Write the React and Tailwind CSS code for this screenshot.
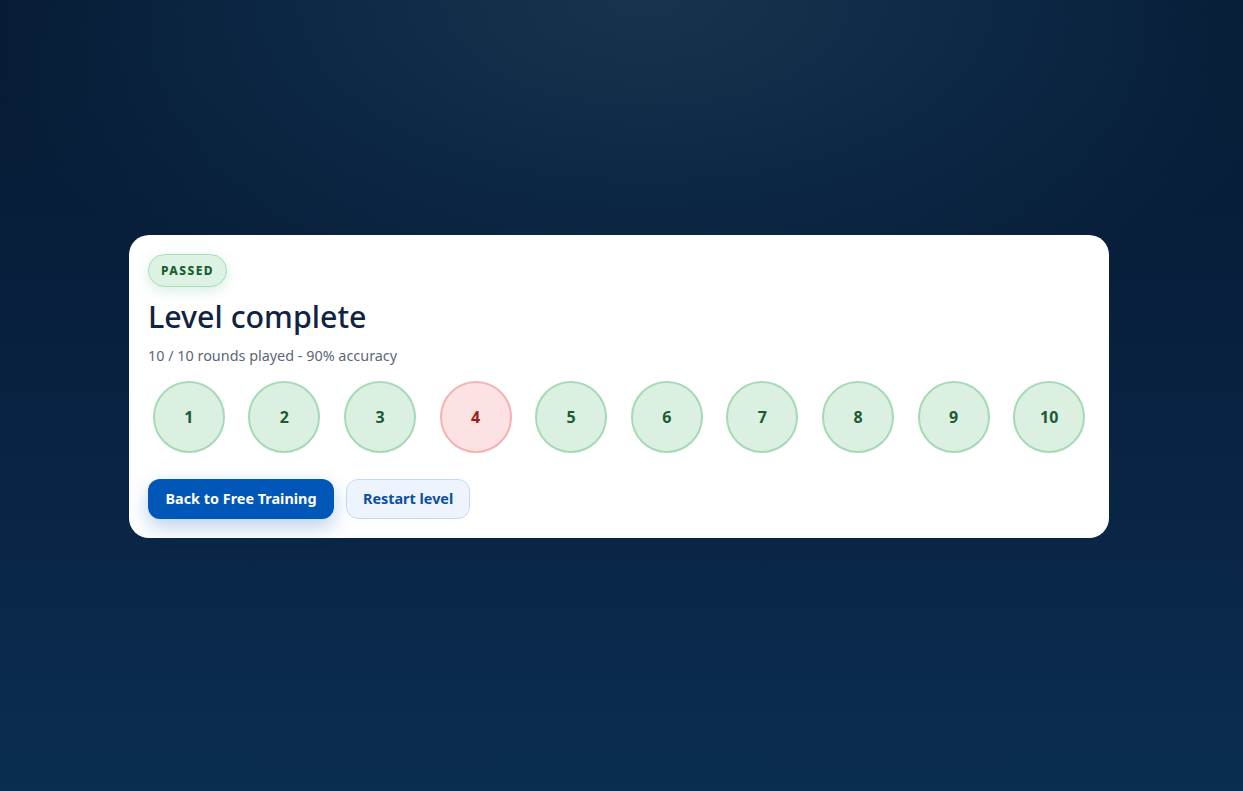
import React from "react";

const rounds = [
  { n: 1, ok: true },
  { n: 2, ok: true },
  { n: 3, ok: true },
  { n: 4, ok: false },
  { n: 5, ok: true },
  { n: 6, ok: true },
  { n: 7, ok: true },
  { n: 8, ok: true },
  { n: 9, ok: true },
  { n: 10, ok: true },
];

export default function App() {
  return (
    <div
      className="min-h-screen w-full flex items-center pl-[129px] pb-[18px] bg-[radial-gradient(ellipse_55%_45%_at_52%_0%,#17344e_0%,#0c2744_55%,transparent_100%),linear-gradient(180deg,#061a33_0%,#08213f_45%,#0b2d52_100%)]"
      style={{ fontFamily: '"Noto Sans", "Open Sans", sans-serif' }}
    >
      <div className="w-[980px] bg-white rounded-[20px] p-[19px]">
        {/* Status badge */}
        <span className="inline-flex items-center h-[33px] px-3 rounded-full bg-[#dcf3e4] border border-[#a8dcb9] text-[#17602f] text-[12px] font-extrabold tracking-[0.12em] shadow-[0_4px_14px_rgba(34,160,90,0.18)]">
          PASSED
        </span>

        <h1 className="mt-[11px] text-[30.4px] leading-[38px] font-medium text-[#0f2442]">
          Level complete
        </h1>
        <p className="mt-[10px] text-[14.4px] leading-[20px] text-[#5c6678]">
          10 / 10 rounds played - 90% accuracy
        </p>

        {/* Round results */}
        <div className="mt-[15px] grid grid-cols-10 gap-[14px]">
          {rounds.map((r) => (
            <div
              key={r.n}
              className={`mx-auto w-[72px] h-[72px] rounded-full border-2 flex items-center justify-center text-[16px] font-bold ${
                r.ok
                  ? "bg-[#dcf0e2] border-[#a4dab6] text-[#1a5c33]"
                  : "bg-[#fde2e3] border-[#f4b3b3] text-[#9d1d1d]"
              }`}
            >
              {r.n}
            </div>
          ))}
        </div>

        {/* Actions */}
        <div className="mt-[26px] flex items-center gap-3">
          <button className="h-[40px] px-[17.5px] rounded-[12px] bg-[#0057b8] text-white text-[14.4px] leading-[20px] pb-[1px] font-bold shadow-[0_8px_20px_rgba(0,87,184,0.28)]">
            Back to Free Training
          </button>
          <button className="h-[40px] px-[16px] rounded-[12px] bg-[#eef4fd] border border-[#c5d8f1] text-[#0b4fa3] text-[14.4px] leading-[20px] pb-[1px] font-bold">
            Restart level
          </button>
        </div>
      </div>
    </div>
  );
}
